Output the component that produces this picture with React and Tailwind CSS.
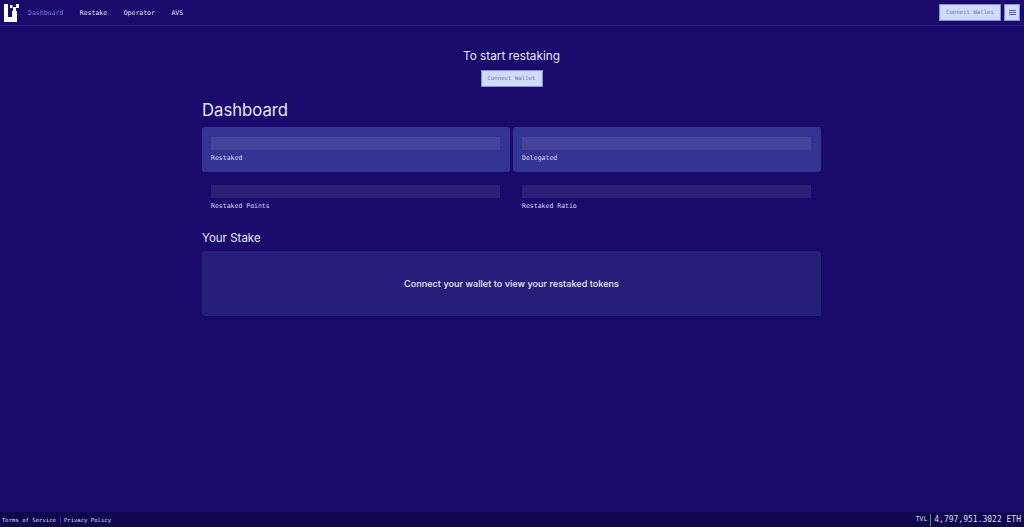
const mono = "font-['DejaVu_Sans_Mono',monospace]";
const sans = "font-['Inter','Noto_Sans',sans-serif]";

function Logo() {
  return (
    <svg width="15" height="18" viewBox="0 0 15 18" className="shrink-0">
      <path d="M0 0h4v13h4V7h5v11H0z" fill="#fff" />
      <path d="M6 1h2.5v3H6zM12 0h3v4h-3zM9 3h3v4H9z" fill="#fff" />
    </svg>
  );
}

function ConnectButton({ className = "" }) {
  return (
    <button className={`w-[62px] h-[17px] bg-[#cfdcff] border border-[#7f8fe0] text-[#6f73ae] text-[5.7px] ${mono} ${className}`}>
      Connect Wallet
    </button>
  );
}

function Stat({ label, filled }) {
  return (
    <div className={`h-[45px] pl-[9px] pr-[10px] pt-[10px] rounded-[3px] ${filled ? "bg-[#353493]" : ""}`}>
      <div className={`h-[13px] ${filled ? "bg-[#46439b]" : "bg-[#2d1f75]"}`} />
      <div className={`mt-[3px] text-[6.5px] leading-[10px] text-[#dcdcf6] ${mono}`}>{label}</div>
    </div>
  );
}

export default function App() {
  return (
    <div className={`h-[527px] flex flex-col overflow-hidden bg-[#190a6b] text-[#e8e8fb] ${sans}`}>
      <header className="h-[26px] shrink-0 flex items-center border-b border-[#2c2080] pl-[4px] pr-[4px]">
        <Logo />
        <nav className={`ml-[9px] pt-[2px] flex gap-[16.5px] text-[6.5px] ${mono}`}>
          <span className="text-[#7f74d6]">Dashboard</span>
          <span className="text-[#e4e4f8]">Restake</span>
          <span className="text-[#e4e4f8]">Operator</span>
          <span className="text-[#e4e4f8]">AVS</span>
        </nav>
        <div className="ml-auto flex gap-[3px] items-center">
          <ConnectButton />
          <button className="w-[16px] h-[17px] bg-[#cfdcff] border border-[#7f8fe0] flex items-center justify-center">
            <span className="w-[7px] h-[7px] flex flex-col justify-between py-[1px]">
              <span className="h-px bg-[#5a5ca6]" />
              <span className="h-px bg-[#5a5ca6]" />
              <span className="h-px bg-[#5a5ca6]" />
            </span>
          </button>
        </div>
      </header>

      <main className="flex-1 flex flex-col items-center pr-[1px]">
        <h2 className="mt-[22px] text-[11.8px] leading-[16px] font-normal">To start restaking</h2>
        <ConnectButton className="mt-[6px]" />
        <div className="w-[619px] mt-[12px]">
          <h1 className="text-[16.7px] leading-[22px] font-normal">Dashboard</h1>
          <div className="mt-[6px] grid grid-cols-2 gap-x-[3px] gap-y-[3px]">
            <Stat label="Restaked" filled />
            <Stat label="Delegated" filled />
            <Stat label="Restaked Points" />
            <Stat label="Restaked Ratio" />
          </div>
          <h3 className="mt-[10px] text-[11.5px] leading-[16px] font-normal">Your Stake</h3>
          <div className="mt-[5px] h-[65px] rounded-[3px] bg-[#271e7c] flex items-center justify-center text-[9.15px] font-medium">
            Connect your wallet to view your restaked tokens
          </div>
        </div>
      </main>

      <footer className={`h-[15px] shrink-0 flex items-center justify-between pt-[1px] bg-[#100650] text-[5.6px] text-[#dcdcf6] ${mono}`}>
        <div className="flex items-center pl-[2px]">
          <span>Terms of Service</span>
          <span className="ml-[4px] pl-[3px] border-l border-[#2c2080]">Privacy Policy</span>
        </div>
        <div className="flex items-center pr-[3px]">
          <span className="text-[6.4px] mr-[3px]">TVL</span>
          <span className="pl-[3px] border-l border-[#3fa04a] text-[8px]">4,797,951.3022 ETH</span>
        </div>
      </footer>
    </div>
  );
}
